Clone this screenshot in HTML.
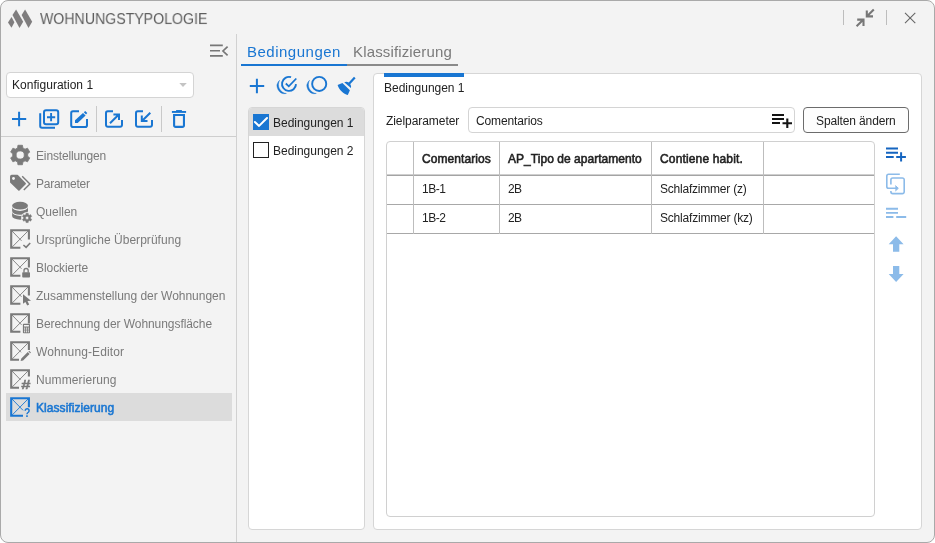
<!DOCTYPE html>
<html lang="de">
<head>
<meta charset="utf-8">
<title>Wohnungstypologie</title>
<style>
html,body{margin:0;padding:0;background:#fff;}
body{width:935px;height:543px;overflow:hidden;position:relative;font-family:"Liberation Sans",sans-serif;font-size:12px;color:#222;}
#win{position:absolute;left:0;top:0;width:933px;height:541px;border:1px solid #a9a9a9;border-radius:8px;background:#f3f3f3;}
.abs{position:absolute;}
.t{position:absolute;white-space:nowrap;line-height:14px;height:14px;transform-origin:0 50%;will-change:transform;}
svg{position:absolute;overflow:visible;}
.vsep{position:absolute;width:1px;background:#c9c9c9;}
.hsep{position:absolute;height:1px;background:#d2d2d2;}
.panel{position:absolute;background:#fff;border:1px solid #d6d6d6;border-radius:4px;box-sizing:border-box;}
.menu{color:#7a7a7a;}
.blue{color:#1976d2;}
.b{font-weight:normal;-webkit-text-stroke:0.550px currentColor;}
</style>
</head>
<body>
<div id="win"></div>

<!-- title bar -->
<svg style="left:0;top:0" width="40" height="34" viewBox="0 0 40 34">
 <g fill="#7f7d7e">
  <polygon points="11.5,16.9 8,22.5 11.5,27.8 14.4,22.3"/>
  <polygon points="16.1,9.6 12.5,15.1 19.5,28.1 23.2,21.8"/>
  <polygon points="25.1,9.6 21.6,15.1 28.5,28.1 32.2,21.8"/>
 </g>
</svg>
<div class="t" id="title" style="left:40px;top:9.300px;font-size:16px;transform:scale(0.884,0.917);transform-origin:0 15.5px;line-height:20px;height:20px;color:#5e5e5e;">WOHNUNGSTYPOLOGIE</div>

<div class="vsep" style="left:843px;top:10px;height:15px;background:#bdbdbd"></div>
<div class="vsep" style="left:886px;top:10px;height:15px;background:#bdbdbd"></div>
<svg style="left:850px;top:4px" width="30" height="28" viewBox="850 4 30 28" fill="none" stroke="#777" stroke-width="2.1">
 <path d="M873.8 9.4 L867 16.2 M866.8 10.6 V16.4 H873"/>
 <path d="M856.6 26.2 L863.4 19.6 M857.2 19.6 H863.5 V26"/>
</svg>
<svg style="left:900px;top:8px" width="20" height="20" viewBox="900 8 20 20" fill="none" stroke="#666" stroke-width="1.1">
 <path d="M905 12.9 L915.3 23.2 M915.3 12.9 L905 23.2"/>
</svg>

<!-- left side -->
<svg style="left:206px;top:40px" width="26" height="22" viewBox="206 40 26 22" fill="none" stroke="#777" stroke-width="1.6">
 <path d="M210 45.4 H222.8 M210 50.8 H220 M210 55.9 H222.8"/>
 <path d="M227.6 46.6 L223 51 L227.6 55.3" stroke-width="1.7"/>
</svg>
<div class="vsep" style="left:236px;top:34px;height:508px;background:#d1d1d1;"></div>

<div class="abs" style="left:6px;top:72px;width:188px;height:26px;box-sizing:border-box;border:1px solid #d4d4d4;border-radius:4px;background:#fff;"></div>
<div class="t" id="combo" style="letter-spacing:0.026px;left:12px;top:78px;">Konfiguration 1</div>
<svg style="left:178px;top:81px" width="10" height="8" viewBox="178 81 10 8"><polygon points="179.3,83 186.8,83 183,87" fill="#c4c4c4"/></svg>

<!-- left toolbar -->
<svg style="left:8px;top:104px" width="184" height="30" viewBox="8 104 184 30" fill="none" stroke="#1976d2" stroke-width="2">
 <path d="M12 119 H26.2 M19.1 111.8 V126.2"/>
 <rect x="44" y="110.2" width="14.2" height="14" rx="2"/>
 <path d="M47 117.2 H55.2 M51.1 113.1 V121.3" stroke-width="1.9"/>
 <path d="M40.2 113.2 V126 a1.8 1.8 0 0 0 1.8 1.8 H55"/>
 <path d="M79 111.3 H73 a1.8 1.8 0 0 0 -1.8 1.8 V125.2 a1.8 1.8 0 0 0 1.8 1.8 H85.2 a1.8 1.8 0 0 0 1.8 -1.8 V119"/>
 <path d="M75 122.900 V120.200 L83 112.900 L85.600 115.400 L77.700 122.900Z M83.800 112.200 L85.200 110.900 L87.300 113.100 L86 114.400Z" fill="#1976d2" stroke="none"/>
 <path d="M113 111.300 H107.800 a1.800 1.800 0 0 0 -1.800 1.800 V125 a1.800 1.800 0 0 0 1.800 1.800 H120.200 a1.800 1.800 0 0 0 1.800 -1.800 V120"/>
 <path d="M110 123.300 L118.600 114.700 M113.400 114.400 H119 V120"/>
 <path d="M143 111.300 H137.800 a1.800 1.800 0 0 0 -1.800 1.800 V125 a1.800 1.800 0 0 0 1.800 1.800 H150.200 a1.800 1.800 0 0 0 1.800 -1.800 V120"/>
 <path d="M150.300 112.700 L142 121 M141.800 115.400 V121.100 H147.500"/>
 <path d="M171.900 111.950 H186.100" stroke-width="1.900"/>
 <path d="M176.100 110.600 H181.900" stroke-width="1.100"/>
 <path d="M174.100 114.950 H183.950 V125.400 a1.500 1.500 0 0 1 -1.500 1.500 H175.600 a1.500 1.500 0 0 1 -1.500 -1.500Z" stroke-width="2.100"/>
</svg>
<div class="vsep" style="left:96px;top:106px;height:26px;"></div>
<div class="vsep" style="left:161px;top:106px;height:26px;"></div>
<div class="hsep" style="left:1px;top:136px;width:235px;background:#cecece;"></div>

<!-- menu -->
<div class="abs" style="left:6px;top:393px;width:226px;height:28px;background:#dcdcdc;"></div>

<div class="t menu" id="m1" style="letter-spacing:-0.147px;left:36px;top:148.500px;">Einstellungen</div>
<div class="t menu" id="m2" style="letter-spacing:-0.266px;left:36px;top:176.500px;">Parameter</div>
<div class="t menu" id="m3" style="letter-spacing:-0.012px;left:36px;top:204.500px;">Quellen</div>
<div class="t menu" id="m4" style="letter-spacing:0.043px;left:36px;top:232.500px;">Ursprüngliche Überprüfung</div>
<div class="t menu" id="m5" style="letter-spacing:-0.065px;left:36px;top:260.500px;">Blockierte</div>
<div class="t menu" id="m6" style="letter-spacing:-0.017px;left:36px;top:288.500px;">Zusammenstellung der Wohnungen</div>
<div class="t menu" id="m7" style="letter-spacing:-0.065px;left:36px;top:316.500px;">Berechnung der Wohnungsfläche</div>
<div class="t menu" id="m8" style="letter-spacing:0.115px;left:36px;top:344.500px;">Wohnung-Editor</div>
<div class="t menu" id="m9" style="letter-spacing:0.104px;left:36px;top:372.500px;">Nummerierung</div>
<div class="t blue b" id="m10" style="letter-spacing:0.059px;left:36px;top:400.500px;">Klassifizierung</div>

<!-- menu icons -->
<svg style="left:8px;top:143px;will-change:transform" width="26" height="280" viewBox="8 143 26 280">
 <g fill="#7a7a7a">
  <path transform="translate(10.200 145)" d="M12.650 2.880 L12.280 0.260 L7.720 0.260 L7.350 2.880 L5.160 4.140 L2.710 3.150 L0.430 7.110 L2.510 8.730 L2.510 11.270 L0.430 12.890 L2.710 16.850 L5.160 15.860 L7.350 17.120 L7.720 19.740 L12.280 19.740 L12.650 17.120 L14.840 15.860 L17.290 16.850 L19.570 12.890 L17.490 11.270 L17.490 8.730 L19.570 7.110 L17.290 3.150 L14.840 4.140Z M5.900 10 a4.100 4.100 0 1 0 8.200 0 a4.100 4.100 0 1 0 -8.200 0Z" fill-rule="evenodd" stroke="#7a7a7a" stroke-width="0.800" stroke-linejoin="round"/>
  <!-- tags -->
  <path d="M11.700 175.700 H17.300 L25.100 183.700 L18.900 189.900 L10.900 182.200 V176.500 a0.800 0.800 0 0 1 0.800 -0.800Z" stroke="#7a7a7a" stroke-width="1.700" stroke-linejoin="round"/>
  <circle cx="13.500" cy="178.500" r="1.450" fill="#f3f3f3"/>
  <path d="M22.200 176.200 L29.900 183.900 L23.800 190.100" fill="none" stroke="#7a7a7a" stroke-width="1.400" stroke-linejoin="round"/>
  <!-- database -->
  <ellipse cx="20.050" cy="205.700" rx="7.950" ry="3.850"/>
  <path d="M12.100 207.100 A7.950 3.850 0 0 0 28 207.100 V211 A7.950 3.850 0 0 1 12.100 211Z"/>
  <path d="M12.100 212.100 A7.950 3.850 0 0 0 28 212.100 V215.900 A7.950 3.850 0 0 1 12.100 215.900Z"/>
  <circle cx="27.100" cy="217.900" r="6" fill="#f3f3f3"/>
  <path transform="translate(27.100 217.900)" d="M1.220 -3.280 L1.100 -4.670 L-1.100 -4.670 L-1.220 -3.280 L-2.230 -2.700 L-3.500 -3.290 L-4.600 -1.390 L-3.450 -0.580 L-3.450 0.580 L-4.600 1.390 L-3.500 3.290 L-2.230 2.700 L-1.220 3.280 L-1.100 4.670 L1.100 4.670 L1.220 3.280 L2.230 2.700 L3.500 3.290 L4.600 1.390 L3.450 0.580 L3.450 -0.580 L4.600 -1.390 L3.500 -3.290 L2.230 -2.700Z M-1.600 0 a1.600 1.600 0 1 0 3.200 0 a1.600 1.600 0 1 0 -3.200 0Z" fill-rule="evenodd" stroke="#7a7a7a" stroke-width="0.500" stroke-linejoin="round"/>
 </g>
 <!-- box icons -->
 <g fill="none" stroke="#7a7a7a">
  <g id="bx4">
   <path d="M20.400 247.700 H11.200 V230.300 H28.900 V239.400" stroke-width="2.100"/>
   <path d="M12 231 L21.500 240.800 M28 231 L12 247.200" stroke-width="0.900"/>
  </g>
  <path d="M23.400 245 L26.100 247.300 L30.200 243" stroke-width="1.600"/>
  <g>
   <path d="M20.400 275.700 H11.200 V258.300 H28.900 V267.400" stroke-width="2.100"/>
   <path d="M12 259 L21.500 268.800 M28 259 L12 275.200" stroke-width="0.900"/>
  </g>
  <g>
   <path d="M20.400 303.700 H11.200 V286.300 H28.900 V295.400" stroke-width="2.100"/>
   <path d="M12 287 L21.500 296.800 M28 287 L12 303.200" stroke-width="0.900"/>
  </g>
  <g>
   <path d="M20.400 331.700 H11.200 V314.300 H28.900 V323.400" stroke-width="2.100"/>
   <path d="M12 315 L21.500 324.800 M28 315 L12 331.200" stroke-width="0.900"/>
  </g>
  <g>
   <path d="M19 359.700 H11.200 V342.300 H28.900 V350" stroke-width="2.100"/>
   <path d="M12 343 L21 352.300 M28 343 L12 359.200" stroke-width="0.900"/>
  </g>
  <g>
   <path d="M19 387.700 H11.200 V370.300 H28.900 V376.400" stroke-width="2.100"/>
   <path d="M12 371 L20.500 379.800 M28 371 L12 387.200" stroke-width="0.900"/>
  </g>
  <g stroke="#1976d2">
   <path d="M23 415.700 H11.200 V398.300 H28.900 V407.200" stroke-width="2.100"/>
   <path d="M12 399 L23 410.300 M28 399 L12 415.200" stroke-width="0.900"/>
  </g>
 </g>
 <g fill="#7a7a7a">
  <!-- lock -->
  <rect x="22.200" y="272.300" width="7.800" height="5.200" rx="0.800"/>
  <path d="M24 272.600 V270.600 a2.100 2.100 0 0 1 4.200 0 V272.600" fill="none" stroke="#7a7a7a" stroke-width="1.300"/>
  <!-- cursor -->
  <path d="M23 294.300 V303.800 L25.400 301.900 L27.200 305.500 L29.200 304.500 L27.500 301.100 L31 300.800Z"/>
  <!-- calculator -->
  <rect x="22.900" y="323.800" width="7.100" height="9.500" rx="0.800"/>
  <rect x="24" y="325" width="4.900" height="1.500" fill="#f3f3f3"/>
  <g fill="#f3f3f3"><rect x="24" y="327.600" width="1.100" height="1.100"/><rect x="25.900" y="327.600" width="1.100" height="1.100"/><rect x="27.800" y="327.600" width="1.100" height="1.100"/><rect x="24" y="329.400" width="1.100" height="1.100"/><rect x="25.900" y="329.400" width="1.100" height="1.100"/><rect x="27.800" y="329.400" width="1.100" height="1.100"/><rect x="24" y="331.200" width="1.100" height="1.100"/><rect x="25.900" y="331.200" width="1.100" height="1.100"/><rect x="27.800" y="331.200" width="1.100" height="1.100"/></g>
  <!-- pencil -->
  <path d="M20.600 361 L21.300 358.600 L27.800 352.100 L29.600 353.900 L23.100 360.400Z M28.400 351.500 L29.200 350.700 L31 352.500 L30.200 353.300Z"/>
 </g>
 <text x="21.200" y="388.800" font-family="Liberation Sans, sans-serif" font-weight="bold" font-size="12.500" fill="#7a7a7a" stroke="#7a7a7a" stroke-width="0.400" textLength="9.200" lengthAdjust="spacingAndGlyphs">#</text>
 <text x="24" y="416.700" font-family="Liberation Sans, sans-serif" font-weight="bold" font-size="12" fill="#1976d2" textLength="6.400" lengthAdjust="spacingAndGlyphs">?</text>
</svg>

<!-- tabs -->
<div class="t blue" id="tab1" style="letter-spacing:0.498px;left:246.500px;top:42.400px;font-size:15px;line-height:20px;height:20px;">Bedingungen</div>
<div class="t" id="tab2" style="letter-spacing:0.149px;left:353px;top:42.400px;font-size:15px;line-height:20px;height:20px;color:#7a7a7a;">Klassifizierung</div>
<div class="abs" style="left:241px;top:64px;width:106px;height:2px;background:#1976d2;"></div>
<div class="abs" style="left:347px;top:64px;width:111px;height:2px;background:#8a8a8a;"></div>

<!-- cond toolbar -->
<svg style="left:246px;top:72px" width="116" height="28" viewBox="246 72 116 28" fill="none" stroke="#1976d2" stroke-width="1.900">
 <path d="M249.800 86 H264.200 M256.900 78.700 V93.200" stroke-width="2"/>
 <path d="M291.050 77.200 A7 7 0 1 0 296 84.100"/>
 <path d="M285.800 83.500 L288.800 86.300 L296.300 78.500" stroke-width="1.800"/>
 <path d="M279.600 80.300 A7.700 7.700 0 0 0 286.400 93.500 A8.900 8.900 0 0 1 279.600 80.300Z" fill="#1976d2" stroke-width="0.400"/>
 <circle cx="319.200" cy="83.900" r="7.050"/>
 <path d="M309.500 80.300 A7.700 7.700 0 0 0 316.300 93.500 A8.900 8.900 0 0 1 309.500 80.300Z" fill="#1976d2" stroke-width="0.400"/>
 <path d="M354.800 77.600 L348.600 84.300" stroke-width="2.200"/>
 <path d="M344.200 82.300 C346.500 81.100 349.200 82.100 350.300 84.300 C351.100 85.500 351.300 86.900 350.900 88.100Z M342.400 83 L349.900 90.300 L347.800 95 C343.500 94 339.400 90.500 337.600 85.100Z" fill="#1976d2" stroke="none"/>
</svg>

<!-- list panel -->
<div class="panel" style="left:248px;top:107px;width:117px;height:423px;"></div>
<div class="abs" style="left:249px;top:108px;width:115px;height:28px;background:#dcdcdc;border-radius:3px 3px 0 0;"></div>
<div class="abs" style="left:253px;top:114px;width:16px;height:16px;background:#1976d2;"></div>
<svg style="left:253px;top:114px" width="16" height="16" viewBox="0 0 16 16" fill="none" stroke="#fff" stroke-width="2"><path d="M1.900 8 L6.100 11.900 L14 4" stroke-linecap="round" stroke-linejoin="round"/></svg>
<div class="abs" style="left:253px;top:142px;width:16px;height:16px;box-sizing:border-box;border:1px solid #222;background:#fff;"></div>
<div class="t" id="l1" style="letter-spacing:-0.021px;left:273px;top:115.500px;">Bedingungen 1</div>
<div class="t" id="l2" style="letter-spacing:-0.021px;left:273px;top:143.500px;">Bedingungen 2</div>

<!-- right panel -->
<div class="panel" style="left:373px;top:73px;width:549px;height:457px;"></div>
<div class="abs" style="left:384px;top:73px;width:80px;height:4px;background:#1976d2;"></div>
<div class="t" id="rt" style="letter-spacing:-0.021px;left:384px;top:81px;">Bedingungen 1</div>
<div class="t" id="zp" style="letter-spacing:-0.061px;left:386px;top:114px;">Zielparameter</div>
<div class="abs" style="left:468px;top:107px;width:327px;height:26px;box-sizing:border-box;border:1px solid #d4d4d4;border-radius:4px;background:#fff;"></div>
<div class="t" id="inp" style="letter-spacing:-0.123px;left:476px;top:114px;">Comentarios</div>
<svg style="left:770px;top:111px" width="24" height="18" viewBox="770 111 24 18" fill="none" stroke="#141414" stroke-width="2.100">
 <path d="M772 115 H784 M772 119 H784 M772 123 H780"/>
 <path d="M782.500 123.300 H792 M787.300 118.600 V128"/>
</svg>
<div class="abs" style="left:803px;top:107px;width:106px;height:26px;box-sizing:border-box;border:1px solid #6c6c6c;border-radius:4px;background:#fdfdfd;"></div>
<div class="t" id="btn" style="letter-spacing:-0.124px;left:816px;top:114px;">Spalten ändern</div>

<!-- table -->
<div class="abs" style="left:386px;top:141px;width:489px;height:376px;box-sizing:border-box;border:1px solid #d0d0d0;border-radius:4px;background:#fff;"></div>
<div class="hsep" style="left:387px;top:174px;width:487px;background:#cfcfcf;"></div>
<div class="hsep" style="left:387px;top:175px;width:487px;background:#a4a4a4;"></div>
<div class="hsep" style="left:387px;top:204px;width:487px;background:#a8a8a8;"></div>
<div class="hsep" style="left:387px;top:233px;width:487px;background:#a8a8a8;"></div>
<div class="vsep" style="left:413px;top:142px;height:92px;background:#bdbdbd;"></div>
<div class="vsep" style="left:499px;top:142px;height:92px;background:#bdbdbd;"></div>
<div class="vsep" style="left:651px;top:142px;height:92px;background:#bdbdbd;"></div>
<div class="vsep" style="left:763px;top:142px;height:92px;background:#bdbdbd;"></div>
<div class="t b" id="h1" style="letter-spacing:0.077px;left:422px;top:151.500px;">Comentarios</div>
<div class="t b" id="h2" style="letter-spacing:0.039px;left:508px;top:151.500px;">AP_Tipo de apartamento</div>
<div class="t b" id="h3" style="letter-spacing:0.148px;left:660px;top:151.500px;">Contiene habit.</div>
<div class="t" id="r11" style="letter-spacing:-0.450px;left:422px;top:182px;">1B-1</div>
<div class="t" id="r12" style="letter-spacing:-0.700px;left:508px;top:182px;">2B</div>
<div class="t" id="r13" style="letter-spacing:-0.214px;left:660px;top:182px;">Schlafzimmer (z)</div>
<div class="t" id="r21" style="letter-spacing:-0.450px;left:422px;top:211px;">1B-2</div>
<div class="t" id="r22" style="letter-spacing:-0.700px;left:508px;top:211px;">2B</div>
<div class="t" id="r23" style="letter-spacing:-0.201px;left:660px;top:211px;">Schlafzimmer (kz)</div>

<!-- right icons -->
<svg style="left:882px;top:144px" width="28" height="142" viewBox="882 144 28 142">
 <g fill="none" stroke="#1565c0" stroke-width="2">
  <path d="M886 148.600 H898 M886 152.800 H898 M886 157 H893.700"/>
  <path d="M896.200 157 H905.900 M901.100 152.200 V161.600"/>
 </g>
 <g fill="none" stroke="#8cbbe9" stroke-width="1.600">
  <path d="M899.800 174.300 H888.600 a1.800 1.800 0 0 0 -1.800 1.800 V186.500 a1.800 1.800 0 0 0 1.800 1.800 H897"/>
  <path d="M890.900 184.500 V179.800 a1.800 1.800 0 0 1 1.800 -1.800 H902.400 a1.800 1.800 0 0 1 1.800 1.800 V191.800 a1.800 1.800 0 0 1 -1.800 1.800 H892.700 a1.800 1.800 0 0 1 -1.800 -1.800 V191"/>
  <path d="M895.400 185.600 L898.300 188.300 L895.400 191" fill="#8cbbe9" stroke-width="1"/>
  <g stroke-width="1.900">
  <path d="M886 208.800 H898 M886 212.900 H898 M886 217 H893.400 M896.200 217 H906.200"/>
  </g>
 </g>
 <g fill="#8cbbe9">
  <path d="M896.100 236.300 L903.600 244.200 H899.300 V251.800 H893 V244.200 H888.700Z"/>
  <path d="M896.100 281.900 L903.600 274 H899.300 V266 H893 V274 H888.700Z"/>
 </g>
</svg>

</body>
</html>
